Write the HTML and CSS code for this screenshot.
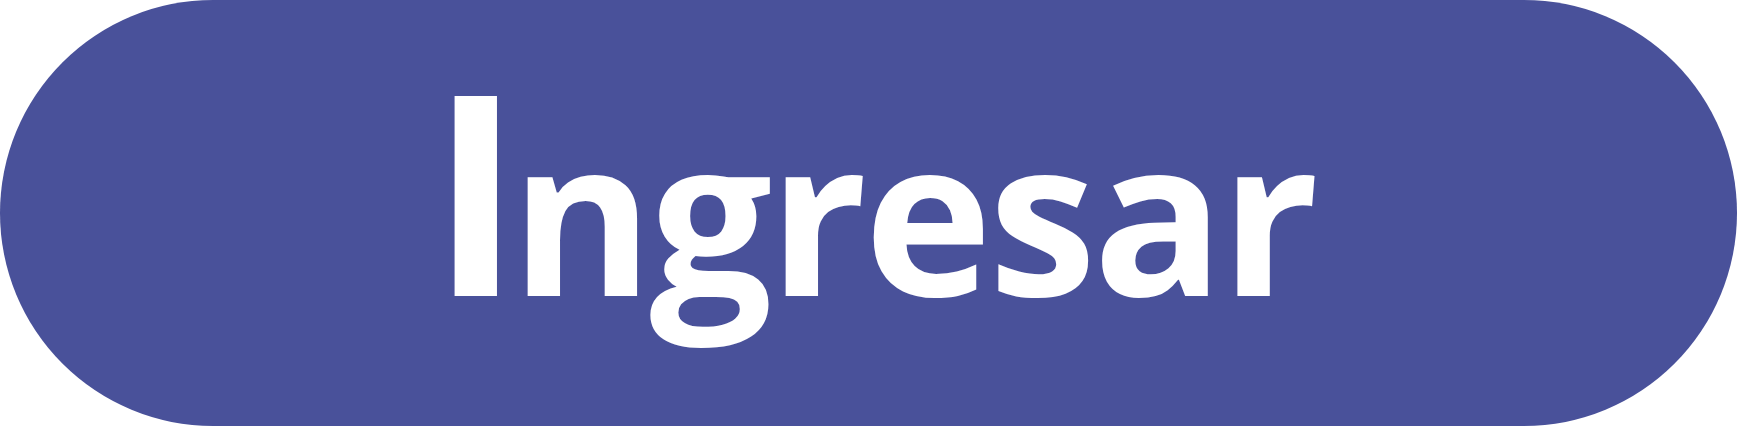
FILE: index.html
```html
<!DOCTYPE html>
<html lang="es">
<head>
<meta charset="utf-8">
<title>Ingresar</title>
<link rel="stylesheet" href="styles.css">
</head>
<body>
<div class="page">
  <button class="btn-ingresar" type="button"><span class="btn-label"><span class="btn-cap">I</span>ngresar</span></button>
</div>
</body>
</html>
```

FILE: styles.css
```css
html, body {
  margin: 0;
  padding: 0;
  background: #ffffff;
}

.page {
  width: 1737px;
  height: 427px;
}

.btn-ingresar {
  display: flex;
  align-items: center;
  justify-content: center;
  width: 1737px;
  height: 426px;
  margin: 0;
  padding: 0 0 50px 8px;
  border: none;
  border-radius: 213px;
  background: #49519a;
  color: #ffffff;
  font-family: "Open Sans", "Noto Sans", sans-serif;
  font-weight: 700;
  cursor: pointer;
}

.btn-label {
  display: block;
  font-size: 217px;
  line-height: 1;
  letter-spacing: -3.5px;
  white-space: nowrap;
}

.btn-cap {
  font-size: 280px;
  margin-right: -8px;
}
```
